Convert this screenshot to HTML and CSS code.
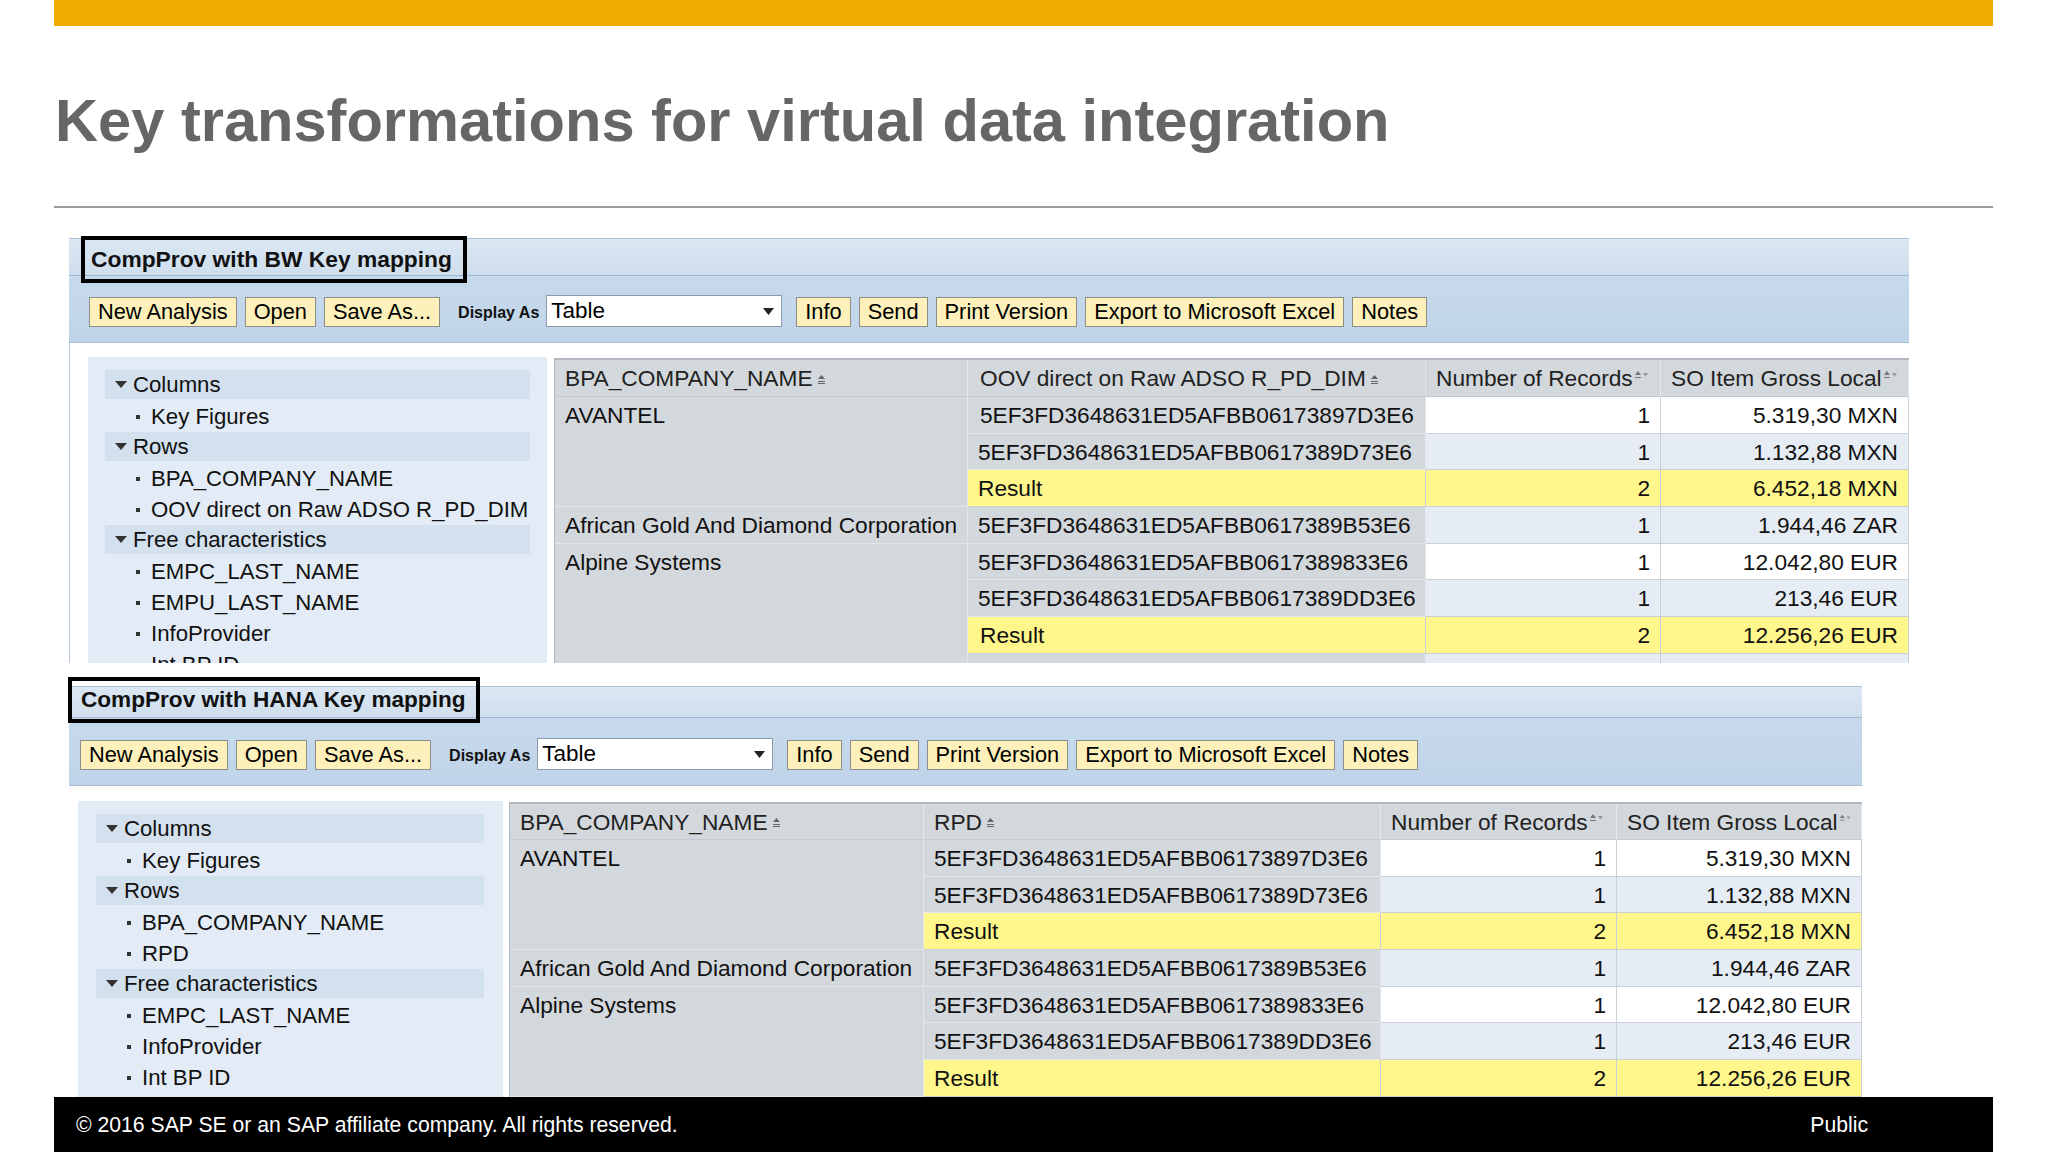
FILE: index.html
```html
<!DOCTYPE html>
<html lang="en">
<head>
<meta charset="utf-8">
<title>Key transformations for virtual data integration</title>
<link rel="stylesheet" href="styles.css">
</head>
<body>
<div class="slide">
  <div class="topbar"></div>
  <h1 class="title">Key transformations for virtual data integration</h1>
  <div class="rule"></div>

  <section class="panel p1">
    <div class="band"><div class="caption">CompProv with BW Key mapping</div></div>
    <div class="toolbar">
      <span class="btn">New Analysis</span>
      <span class="btn">Open</span>
      <span class="btn">Save As...</span>
      <span class="lbl">Display As</span>
      <span class="select"><span>Table</span><svg class="dd" width="11" height="7" viewBox="0 0 11 7"><path d="M0 0H11L5.5 7Z" fill="#222"/></svg></span>
      <span class="btn">Info</span>
      <span class="btn">Send</span>
      <span class="btn">Print Version</span>
      <span class="btn">Export to Microsoft Excel</span>
      <span class="btn">Notes</span>
    </div>
    <div class="body">
      <div class="nav">
        <div class="grp"><i class="tri"></i>Columns</div>
        <div class="item"><i class="dot"></i>Key Figures</div>
        <div class="grp"><i class="tri"></i>Rows</div>
        <div class="item"><i class="dot"></i>BPA_COMPANY_NAME</div>
        <div class="item"><i class="dot"></i>OOV direct on Raw ADSO R_PD_DIM</div>
        <div class="grp"><i class="tri"></i>Free characteristics</div>
        <div class="item"><i class="dot"></i>EMPC_LAST_NAME</div>
        <div class="item"><i class="dot"></i>EMPU_LAST_NAME</div>
        <div class="item"><i class="dot"></i>InfoProvider</div>
        <div class="item"><i class="dot"></i>Int BP ID</div>
      </div>
      <div class="grid g1">
        <div class="c h">BPA_COMPANY_NAME<svg class="s1" width="9" height="11" viewBox="0 0 9 11"><path d="M1 5L4.5 1L8 5Z" fill="#666"/><path d="M1 7.5H8M1 9.5H8" stroke="#666" stroke-width="1"/></svg></div>
        <div class="c h">OOV direct on Raw ADSO R_PD_DIM<svg class="s1" width="9" height="11" viewBox="0 0 9 11"><path d="M1 5L4.5 1L8 5Z" fill="#666"/><path d="M1 7.5H8M1 9.5H8" stroke="#666" stroke-width="1"/></svg></div>
        <div class="c h">Number of Records<svg class="s2" width="15" height="11" viewBox="0 0 15 11"><path d="M1 5L4 1L7 5Z" fill="#777"/><path d="M1 7.5H7" stroke="#777"/><path d="M9 3H14L11.5 6.5Z" fill="#999"/></svg></div>
        <div class="c h">SO Item Gross Local<svg class="s2" width="15" height="11" viewBox="0 0 15 11"><path d="M1 5L4 1L7 5Z" fill="#777"/><path d="M1 7.5H7" stroke="#777"/><path d="M9 3H14L11.5 6.5Z" fill="#999"/></svg></div>

        <div class="c g r3">AVANTEL</div>
        <div class="c g">5EF3FD3648631ED5AFBB06173897D3E6</div>
        <div class="c w n">1</div>
        <div class="c w n">5.319,30 MXN</div>
        <div class="c g">5EF3FD3648631ED5AFBB0617389D73E6</div>
        <div class="c l n">1</div>
        <div class="c l n">1.132,88 MXN</div>
        <div class="c y">Result</div>
        <div class="c y n">2</div>
        <div class="c y n">6.452,18 MXN</div>

        <div class="c g">African Gold And Diamond Corporation</div>
        <div class="c g">5EF3FD3648631ED5AFBB0617389B53E6</div>
        <div class="c l n">1</div>
        <div class="c l n">1.944,46 ZAR</div>

        <div class="c g r4">Alpine Systems</div>
        <div class="c g">5EF3FD3648631ED5AFBB0617389833E6</div>
        <div class="c w n">1</div>
        <div class="c w n">12.042,80 EUR</div>
        <div class="c g">5EF3FD3648631ED5AFBB0617389DD3E6</div>
        <div class="c l n">1</div>
        <div class="c l n">213,46 EUR</div>
        <div class="c y">Result</div>
        <div class="c y n">2</div>
        <div class="c y n">12.256,26 EUR</div>
        <div class="c g"></div>
        <div class="c l"></div>
        <div class="c l"></div>
      </div>
    </div>
  </section>

  <section class="panel p2">
    <div class="band"><div class="caption">CompProv with HANA Key mapping</div></div>
    <div class="toolbar">
      <span class="btn">New Analysis</span>
      <span class="btn">Open</span>
      <span class="btn">Save As...</span>
      <span class="lbl">Display As</span>
      <span class="select"><span>Table</span><svg class="dd" width="11" height="7" viewBox="0 0 11 7"><path d="M0 0H11L5.5 7Z" fill="#222"/></svg></span>
      <span class="btn">Info</span>
      <span class="btn">Send</span>
      <span class="btn">Print Version</span>
      <span class="btn">Export to Microsoft Excel</span>
      <span class="btn">Notes</span>
    </div>
    <div class="body">
      <div class="nav">
        <div class="grp"><i class="tri"></i>Columns</div>
        <div class="item"><i class="dot"></i>Key Figures</div>
        <div class="grp"><i class="tri"></i>Rows</div>
        <div class="item"><i class="dot"></i>BPA_COMPANY_NAME</div>
        <div class="item"><i class="dot"></i>RPD</div>
        <div class="grp"><i class="tri"></i>Free characteristics</div>
        <div class="item"><i class="dot"></i>EMPC_LAST_NAME</div>
        <div class="item"><i class="dot"></i>InfoProvider</div>
        <div class="item"><i class="dot"></i>Int BP ID</div>
      </div>
      <div class="grid g2">
        <div class="c h">BPA_COMPANY_NAME<svg class="s1" width="9" height="11" viewBox="0 0 9 11"><path d="M1 5L4.5 1L8 5Z" fill="#666"/><path d="M1 7.5H8M1 9.5H8" stroke="#666" stroke-width="1"/></svg></div>
        <div class="c h">RPD<svg class="s1" width="9" height="11" viewBox="0 0 9 11"><path d="M1 5L4.5 1L8 5Z" fill="#666"/><path d="M1 7.5H8M1 9.5H8" stroke="#666" stroke-width="1"/></svg></div>
        <div class="c h">Number of Records<svg class="s2" width="15" height="11" viewBox="0 0 15 11"><path d="M1 5L4 1L7 5Z" fill="#777"/><path d="M1 7.5H7" stroke="#777"/><path d="M9 3H14L11.5 6.5Z" fill="#999"/></svg></div>
        <div class="c h">SO Item Gross Local<svg class="s2" width="15" height="11" viewBox="0 0 15 11"><path d="M1 5L4 1L7 5Z" fill="#777"/><path d="M1 7.5H7" stroke="#777"/><path d="M9 3H14L11.5 6.5Z" fill="#999"/></svg></div>

        <div class="c g r3">AVANTEL</div>
        <div class="c g">5EF3FD3648631ED5AFBB06173897D3E6</div>
        <div class="c w n">1</div>
        <div class="c w n">5.319,30 MXN</div>
        <div class="c g">5EF3FD3648631ED5AFBB0617389D73E6</div>
        <div class="c l n">1</div>
        <div class="c l n">1.132,88 MXN</div>
        <div class="c y">Result</div>
        <div class="c y n">2</div>
        <div class="c y n">6.452,18 MXN</div>

        <div class="c g">African Gold And Diamond Corporation</div>
        <div class="c g">5EF3FD3648631ED5AFBB0617389B53E6</div>
        <div class="c l n">1</div>
        <div class="c l n">1.944,46 ZAR</div>

        <div class="c g r3">Alpine Systems</div>
        <div class="c g">5EF3FD3648631ED5AFBB0617389833E6</div>
        <div class="c w n">1</div>
        <div class="c w n">12.042,80 EUR</div>
        <div class="c g">5EF3FD3648631ED5AFBB0617389DD3E6</div>
        <div class="c l n">1</div>
        <div class="c l n">213,46 EUR</div>
        <div class="c y">Result</div>
        <div class="c y n">2</div>
        <div class="c y n">12.256,26 EUR</div>
      </div>
    </div>
  </section>

  <footer class="footer">
    <span>© 2016 SAP SE or an SAP affiliate company. All rights reserved.</span>
    <span>Public</span>
  </footer>
</div>
</body>
</html>
```

FILE: styles.css
```css
html, body {
  margin: 0;
  padding: 0;
  background: #ffffff;
}

.slide {
  width: 2048px;
  height: 1152px;
  overflow: hidden;
  background: #ffffff;
  font-family: "Liberation Sans", Arial, sans-serif;
  color: #000;
}

.topbar {
  margin: 0 55px 0 54px;
  height: 26px;
  background: #f0ab00;
}

.title {
  margin: 60px 0 0 55px;
  font: bold 59.6px/69px "Liberation Sans", Arial, sans-serif;
  color: #666666;
  white-space: nowrap;
}

.rule {
  margin: 51px 55px 0 54px;
  height: 2px;
  background: #9c9c9c;
}

/* ---------- panels ---------- */
.panel {
  margin-left: 69px;
}
.p1 {
  margin-top: 30px;
  width: 1840px;
}
.p2 {
  margin-top: 23px;
  width: 1793px;
}

.band {
  box-sizing: border-box;
  border-top: 1px solid #a9c0d7;
  background: linear-gradient(#dbe7f3, #cfdeed);
  display: flex;
  align-items: flex-start;
}
.p1 .band { height: 37px; }
.p2 .band { height: 31px; }

.caption {
  position: relative;
  z-index: 1;
  box-sizing: border-box;
  border: 4px solid #000;
  font-weight: bold;
  white-space: nowrap;
  color: #111;
}
.p1 .caption {
  margin: -3px 0 0 12px;
  height: 47px;
  padding: 0 11px 0 6px;
  font-size: 22.8px;
  line-height: 39px;
}
.p2 .caption {
  margin: -10px 0 0 -1px;
  height: 46px;
  padding: 0 10px 0 9px;
  font-size: 22.6px;
  line-height: 38px;
}

.toolbar {
  box-sizing: border-box;
  border-top: 1px solid #9fb7cf;
  border-bottom: 1px solid #a8bdd2;
  background: linear-gradient(#c7d9ec, #c0d4e9);
  display: flex;
  align-items: flex-start;
}
.p1 .toolbar { height: 68px; padding: 21px 0 0 20px; }
.p2 .toolbar { height: 69px; padding: 22px 0 0 11px; }

.btn {
  box-sizing: border-box;
  height: 30px;
  border: 1px solid #8d8d8d;
  background: #fdf0bb;
  font-size: 21.8px;
  line-height: 28px;
  padding: 0 8px;
  margin-right: 8px;
  white-space: nowrap;
  color: #000;
}

.lbl {
  margin: 0 7px 0 10px;
  font-size: 16px;
  font-weight: bold;
  line-height: 31px;
  color: #111;
  white-space: nowrap;
}

.select {
  box-sizing: border-box;
  width: 236px;
  height: 32px;
  margin: -2px 14px 0 0;
  background: #fff;
  border: 1px solid #8c9aaa;
  display: flex;
  align-items: center;
  justify-content: space-between;
  padding: 0 7px 0 4px;
  font-size: 22.5px;
}
.dd { display: block; }

/* ---------- body ---------- */
.body {
  display: flex;
  align-items: stretch;
  overflow: hidden;
}
.p1 .body {
  height: 320px;
  padding: 14px 0 0 18px;
  border-left: 1px solid #b6c9dc;
  box-sizing: border-box;
}
.p2 .body {
  height: 311px;
  padding: 15px 0 0 9px;
  box-sizing: border-box;
}

.nav {
  background: #e3ecf6;
  flex: none;
  box-sizing: border-box;
  font-size: 22.2px;
  color: #111;
}
.p1 .nav { width: 459px; margin-right: 7px; padding: 13px 17px 0 17px; }
.p2 .nav { width: 425px; margin-right: 6px; padding: 13px 19px 0 18px; }

.grp {
  height: 29px;
  line-height: 29px;
  margin-bottom: 2px;
  background: #d3e0ed;
  padding-left: 10px;
  display: flex;
  align-items: center;
  white-space: nowrap;
}
.tri {
  width: 0;
  height: 0;
  border-left: 6.5px solid transparent;
  border-right: 6.5px solid transparent;
  border-top: 7px solid #333;
  margin-right: 6px;
}
.item {
  height: 31px;
  line-height: 31px;
  padding-left: 31px;
  display: flex;
  align-items: center;
  white-space: nowrap;
}
.dot {
  width: 4px;
  height: 4px;
  background: #333;
  margin-right: 11px;
}

/* ---------- grid tables ---------- */
.grid {
  display: grid;
  margin-top: 1px;
  border-top: 2px solid #b1b8bf;
  border-left: 1px solid #b1b8bf;
  align-self: flex-start;
  font-size: 22.7px;
}
.g1 {
  grid-template-columns: 413px 458px 235px 248px;
  grid-template-rows: 37px repeat(8, 36.7px);
}
.g2 {
  grid-template-columns: 414px 457px 236px 245px;
  grid-template-rows: 36px repeat(7, 36.7px);
}

.c {
  box-sizing: border-box;
  border-right: 1px solid #c9cfd6;
  border-bottom: 1px solid #c9cfd6;
  padding: 0 10px;
  line-height: 36px;
  white-space: nowrap;
  overflow: hidden;
  color: #111;
}
.h {
  background: #d3d8dd;
  border-color: #e4e7ea;
  border-bottom-color: #c3c9cf;
  display: flex;
  align-items: center;
  color: #222;
}
.s1 { margin-left: 4px; margin-top: 2px; }
.s2 { margin-left: 1px; margin-top: -6px; }
.g { background: #d3d8dd; border-color: #e3e7eb; }
.w { background: #ffffff; }
.l { background: #e6ecf4; }
.y { background: #fff68c; }
.n { text-align: right; }
.r3 { grid-row: span 3; }
.r4 { grid-row: span 4; }

.g1 .c:nth-child(4n+2) { padding-left: 12px; }
.g1 .h:nth-child(2) { padding-left: 12px; }

/* ---------- footer ---------- */
.footer {
  margin: 0 55px 0 54px;
  height: 55px;
  background: #000;
  color: #fff;
  display: flex;
  justify-content: space-between;
  align-items: center;
  padding: 0 125px 0 22px;
  font-size: 21.2px;
}
```
